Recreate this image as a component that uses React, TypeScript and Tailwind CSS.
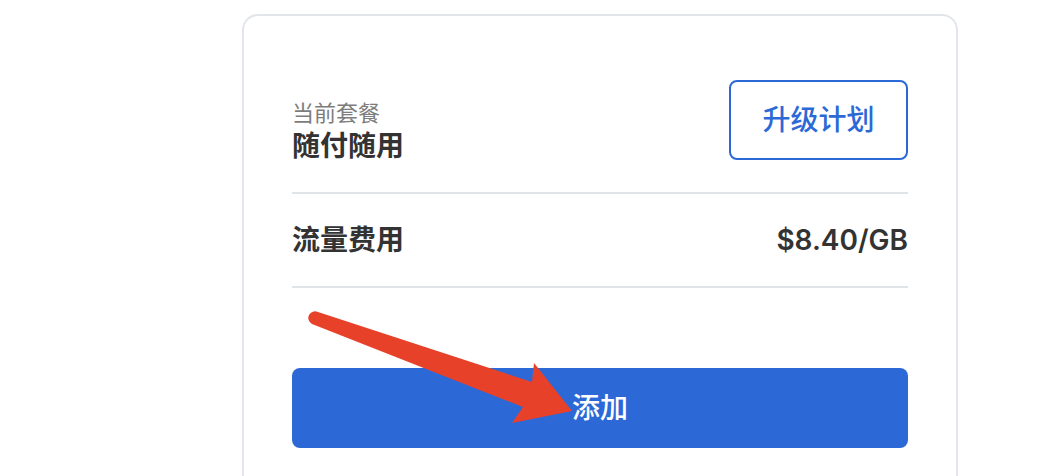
import React from "react";

const font = {
  fontFamily: '"Inter", "Noto Sans CJK SC", sans-serif',
};

function Arrow() {
  // red annotation arrow drawn over the card
  return (
    <svg
      className="absolute left-0 top-0 pointer-events-none"
      width={1046}
      height={476}
      viewBox="0 0 1046 476"
    >
      <path
        d="M318 312 L532 382 L534 363 L572 411 L512 423 L523 407 L312 324 A6 6 0 0 1 318 312 Z"
        fill="#e8412a"
      />
    </svg>
  );
}

export default function App() {
  return (
    <div className="relative h-[476px] w-[1046px] overflow-hidden bg-white" style={font}>
      <div className="ml-[242px] mt-[14px] w-[716px] rounded-[16px] border-2 border-[#e2e6ea] px-[48px] pt-[64px] pb-[60px]">
        <div className="flex h-[80px] items-start justify-between">
          <div className="mt-[20px] flex flex-col gap-[3px]">
            <span className="text-[22px] leading-[26px] text-[#7d7d7d]">当前套餐</span>
            <span className="text-[28px] leading-[34px] font-semibold text-[#333]">随付随用</span>
          </div>
          <button className="flex h-[80px] w-[179px] items-center justify-center rounded-[8px] border-2 border-[#2c69d6] text-[28px] font-medium text-[#2c69d6]">
            升级计划
          </button>
        </div>

        <div className="mt-[32px] h-[2px] bg-[#e0e4e8]" />

        <div className="flex h-[92px] items-center justify-between">
          <span className="text-[28px] font-semibold text-[#333]">流量费用</span>
          <span className="text-[28px] font-semibold text-[#333]">$8.40/GB</span>
        </div>

        <div className="h-[2px] bg-[#e0e4e8]" />

        <button className="mt-[80px] flex h-[80px] w-full items-center justify-center rounded-[8px] bg-[#2c69d6] text-[28px] font-medium text-white">
          添加
        </button>
      </div>
      <Arrow />
    </div>
  );
}
